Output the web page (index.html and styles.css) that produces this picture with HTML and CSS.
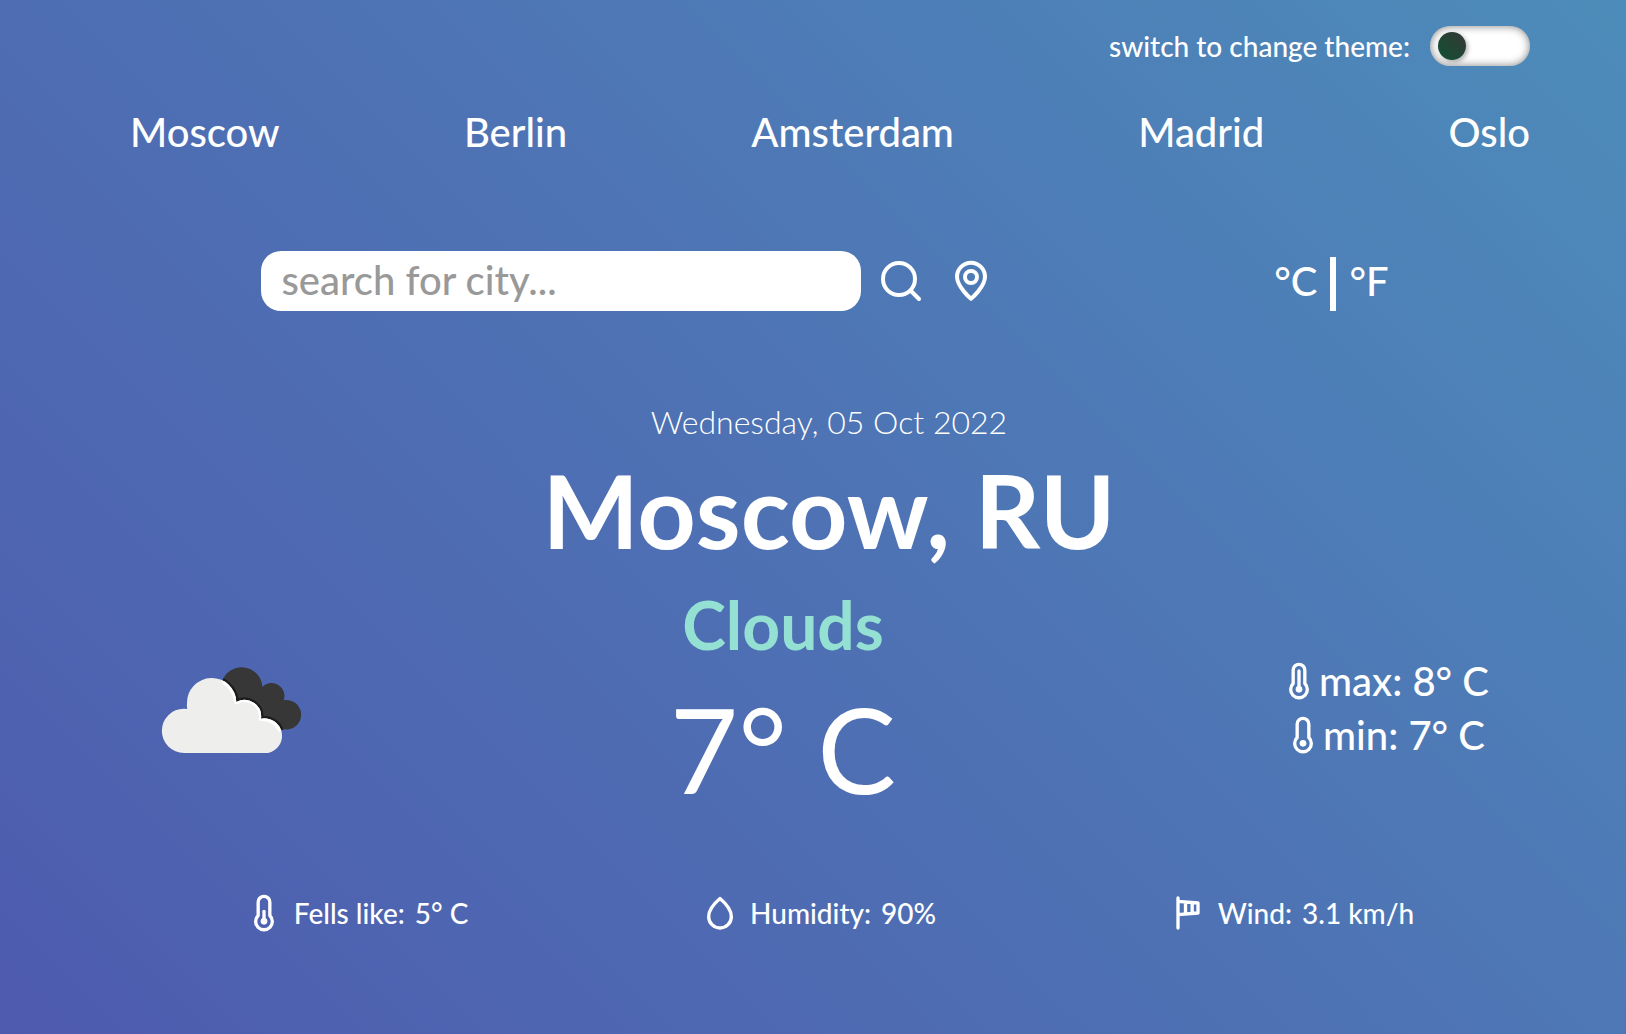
FILE: index.html
```html
<!DOCTYPE html>
<html lang="en">
<head>
<meta charset="utf-8">
<meta name="viewport" content="width=device-width, initial-scale=1">
<title>Weather</title>
<link rel="stylesheet" href="styles.css">
</head>
<body>
<div class="app">
  <header class="header">
    <div class="theme">
      <label for="theme">switch to change theme:</label>
      <input class="toggle" id="theme" type="checkbox" role="switch">
    </div>
    <nav class="cities">
      <a href="#moscow">Moscow</a>
      <a href="#berlin">Berlin</a>
      <a href="#amsterdam">Amsterdam</a>
      <a href="#madrid">Madrid</a>
      <a href="#oslo">Oslo</a>
    </nav>
  </header>

  <main>
    <div class="controls">
      <form class="search">
        <input class="search-input" type="text" placeholder="search for city..." aria-label="City">
        <div class="search-actions">
          <button type="submit" aria-label="Search">
            <svg class="icon-lg" viewBox="0 0 24 24"><circle cx="11" cy="11" r="8"/><path d="M17 17l4 4"/></svg>
          </button>
          <button type="button" aria-label="Use my location">
            <svg class="icon-lg" viewBox="0 0 24 24"><path d="M12 20.9C12 20.9 5 15 5 9.9a7 7 0 0 1 14 0C19 15 12 20.9 12 20.9z"/><circle cx="12" cy="10" r="3"/></svg>
          </button>
        </div>
      </form>
      <div class="units">
        <button type="button">°C</button>
        <span class="divider"></span>
        <button type="button">°F</button>
      </div>
    </div>

    <p class="date">Wednesday, 05 Oct 2022</p>
    <h1 class="place">Moscow, RU</h1>

    <section class="current">
      <svg class="cloud" viewBox="-36 -102 600 600" role="img" aria-label="Clouds">
        <defs>
          <path id="front" d="M132 339A66 66 0 0 1 132 206Q137 206 142 207Q140 202 141 190A74 74 0 0 1 289 186A50 50 0 0 1 363 236A52 52 0 0 1 384 339Z"/>
          <clipPath id="back"><path d="M246 125A62 62 0 0 1 367 140A39 39 0 0 1 431 181A44 44 0 1 1 436 268L300 290Z"/></clipPath>
          <clipPath id="frontClip"><use href="#front"/></clipPath>
        </defs>
        <g clip-path="url(#back)">
          <rect class="cloud-back" x="200" y="60" width="300" height="240"/>
          <use class="cloud-shade" href="#front"/>
        </g>
        <use class="cloud-front" href="#front"/>
        <path class="cloud-light" clip-path="url(#frontClip)" d="M252 125Q284 145 289 186A50 50 0 0 1 363 236Q402 236 420 268"/>
      </svg>

      <div class="now">
        <h2 class="condition">Clouds</h2>
        <p class="temp">7° C</p>
      </div>

      <div class="range">
        <p>
          <svg class="icon" viewBox="0 0 24 24"><path d="M8.5 5.5a3.5 3.5 0 0 1 7 0v8a5 5 0 1 1-7 0z"/><path d="M12 6v11"/><circle class="solid" cx="12" cy="17" r="2"/></svg>max: 8° C
        </p>
        <p>
          <svg class="icon" viewBox="0 0 24 24"><path d="M8.5 5.5a3.5 3.5 0 0 1 7 0v8a5 5 0 1 1-7 0z"/><circle class="solid" cx="12" cy="17" r="2"/></svg>min: 7° C
        </p>
      </div>
    </section>

    <section class="details">
      <p>
        <svg class="icon" viewBox="0 0 24 24"><path d="M8.5 5.5a3.5 3.5 0 0 1 7 0v8a5 5 0 1 1-7 0z"/><path d="M12 11v6"/><circle class="solid" cx="12" cy="17" r="2"/></svg>
        <span>Fells like:</span> <span>5° C</span>
      </p>
      <p>
        <svg class="icon" viewBox="0 0 24 24"><path d="M12 3.3C8.200 6.500 5.200 10.400 5.200 14.200a6.800 6.800 0 0 0 13.600 0C18.800 10.400 15.800 6.500 12 3.300z"/></svg>
        <span>Humidity:</span> <span>90%</span>
      </p>
      <p>
        <svg class="icon" viewBox="0 0 24 24"><path d="M6 3v18M6 5l12 1v6L6 13M10.500 5.500v7M14.500 5.800v6.500"/></svg>
        <span>Wind:</span> <span>3.1 km/h</span>
      </p>
    </section>
  </main>
</div>
</body>
</html>
```
FILE: styles.css
```css
* {
  box-sizing: border-box;
}

body {
  margin: 0;
  min-height: 100vh;
  color: #fff;
  font-family: Lato, "Open Sans", sans-serif;
  font-size: 28px;
  font-weight: 500;
  line-height: 40px;
  background: linear-gradient(45deg, #4e5aae, #4e65b1 20%, #4e72b4 50%, #4d8cba);
}

h1, h2, p {
  margin: 0;
}

a {
  color: inherit;
  text-decoration: none;
}

button {
  padding: 0;
  border: 0;
  background: none;
  color: inherit;
  font: inherit;
  cursor: pointer;
}

svg {
  display: block;
  flex: none;
  fill: none;
  stroke: #fff;
  stroke-width: 2;
  stroke-linecap: round;
  stroke-linejoin: round;
}

.icon {
  width: 40px;
  height: 40px;
}

.icon-lg {
  width: 48px;
  height: 48px;
}

.solid {
  fill: #fff;
  stroke: none;
}

.app {
  padding: 26px 96px 96px 128px;
}

.theme {
  display: flex;
  justify-content: flex-end;
  align-items: center;
  gap: 20px;
}

.toggle {
  appearance: none;
  display: flex;
  align-items: center;
  width: 100px;
  height: 40px;
  margin: 0;
  padding: 0 8px;
  border-radius: 20px;
  background: #fff;
  box-shadow: inset 0 0 8px rgba(0, 0, 0, 0.5);
}

.toggle::before {
  content: "";
  width: 28px;
  height: 28px;
  border-radius: 50%;
  background: linear-gradient(45deg, #0f5132, #373737);
  box-shadow: 2px 2px 4px rgba(0, 0, 0, 0.3);
}

.toggle:checked::before {
  margin-left: auto;
}

.cities {
  display: flex;
  justify-content: space-between;
  margin-top: 39px;
  padding-left: 2px;
  font-size: 40px;
  line-height: 54px;
}

.controls {
  display: flex;
  justify-content: space-around;
  align-items: center;
  margin-top: 92px;
  padding-right: 8px;
  font-size: 40px;
}

.search {
  display: flex;
  align-items: center;
  gap: 16px;
  padding-right: 12px;
}

.search-input {
  width: 600px;
  height: 60px;
  padding: 0 20px 2px;
  border: 0;
  border-radius: 20px;
  background: #fff;
  color: #333;
  font: inherit;
}

.search-input::placeholder {
  color: #999;
}

.search-actions {
  display: flex;
  gap: 22px;
}

.units {
  display: flex;
  align-items: center;
  gap: 13px;
}

.divider {
  width: 6px;
  height: 54px;
  margin-top: 6px;
  background: #fff;
}

.date {
  margin-top: 89px;
  font-size: 32px;
  font-weight: 300;
  line-height: 44px;
  text-align: center;
}

.place {
  margin-bottom: 4px;
  font-size: 102px;
  font-weight: 700;
  line-height: 132px;
  text-align: center;
}

.current {
  display: grid;
  grid-template-columns: 200px 1fr 292px;
  align-items: center;
}

.cloud {
  width: 200px;
  height: 200px;
  stroke: none;
}

.cloud-back {
  fill: #373737;
}

.cloud-shade {
  stroke: #1c1c1c;
  stroke-width: 14;
}

.cloud-front {
  fill: #eeeeec;
}

.cloud-light {
  fill: none;
  stroke: #fff;
  stroke-width: 14;
}

.now {
  padding-bottom: 4px;
  text-align: center;
}

.condition {
  color: #94e0d2;
  font-size: 66px;
  font-weight: 700;
  line-height: 90px;
}

.temp {
  font-size: 118px;
  font-weight: 400;
  line-height: 158px;
}

.range {
  padding-top: 4px;
  font-size: 40px;
  line-height: 54px;
}

.range p {
  display: flex;
  justify-content: center;
  align-items: center;
}

.details {
  display: flex;
  justify-content: space-around;
  margin-top: 61px;
}

.details p {
  display: flex;
  align-items: center;
  gap: 10px;
}
```
